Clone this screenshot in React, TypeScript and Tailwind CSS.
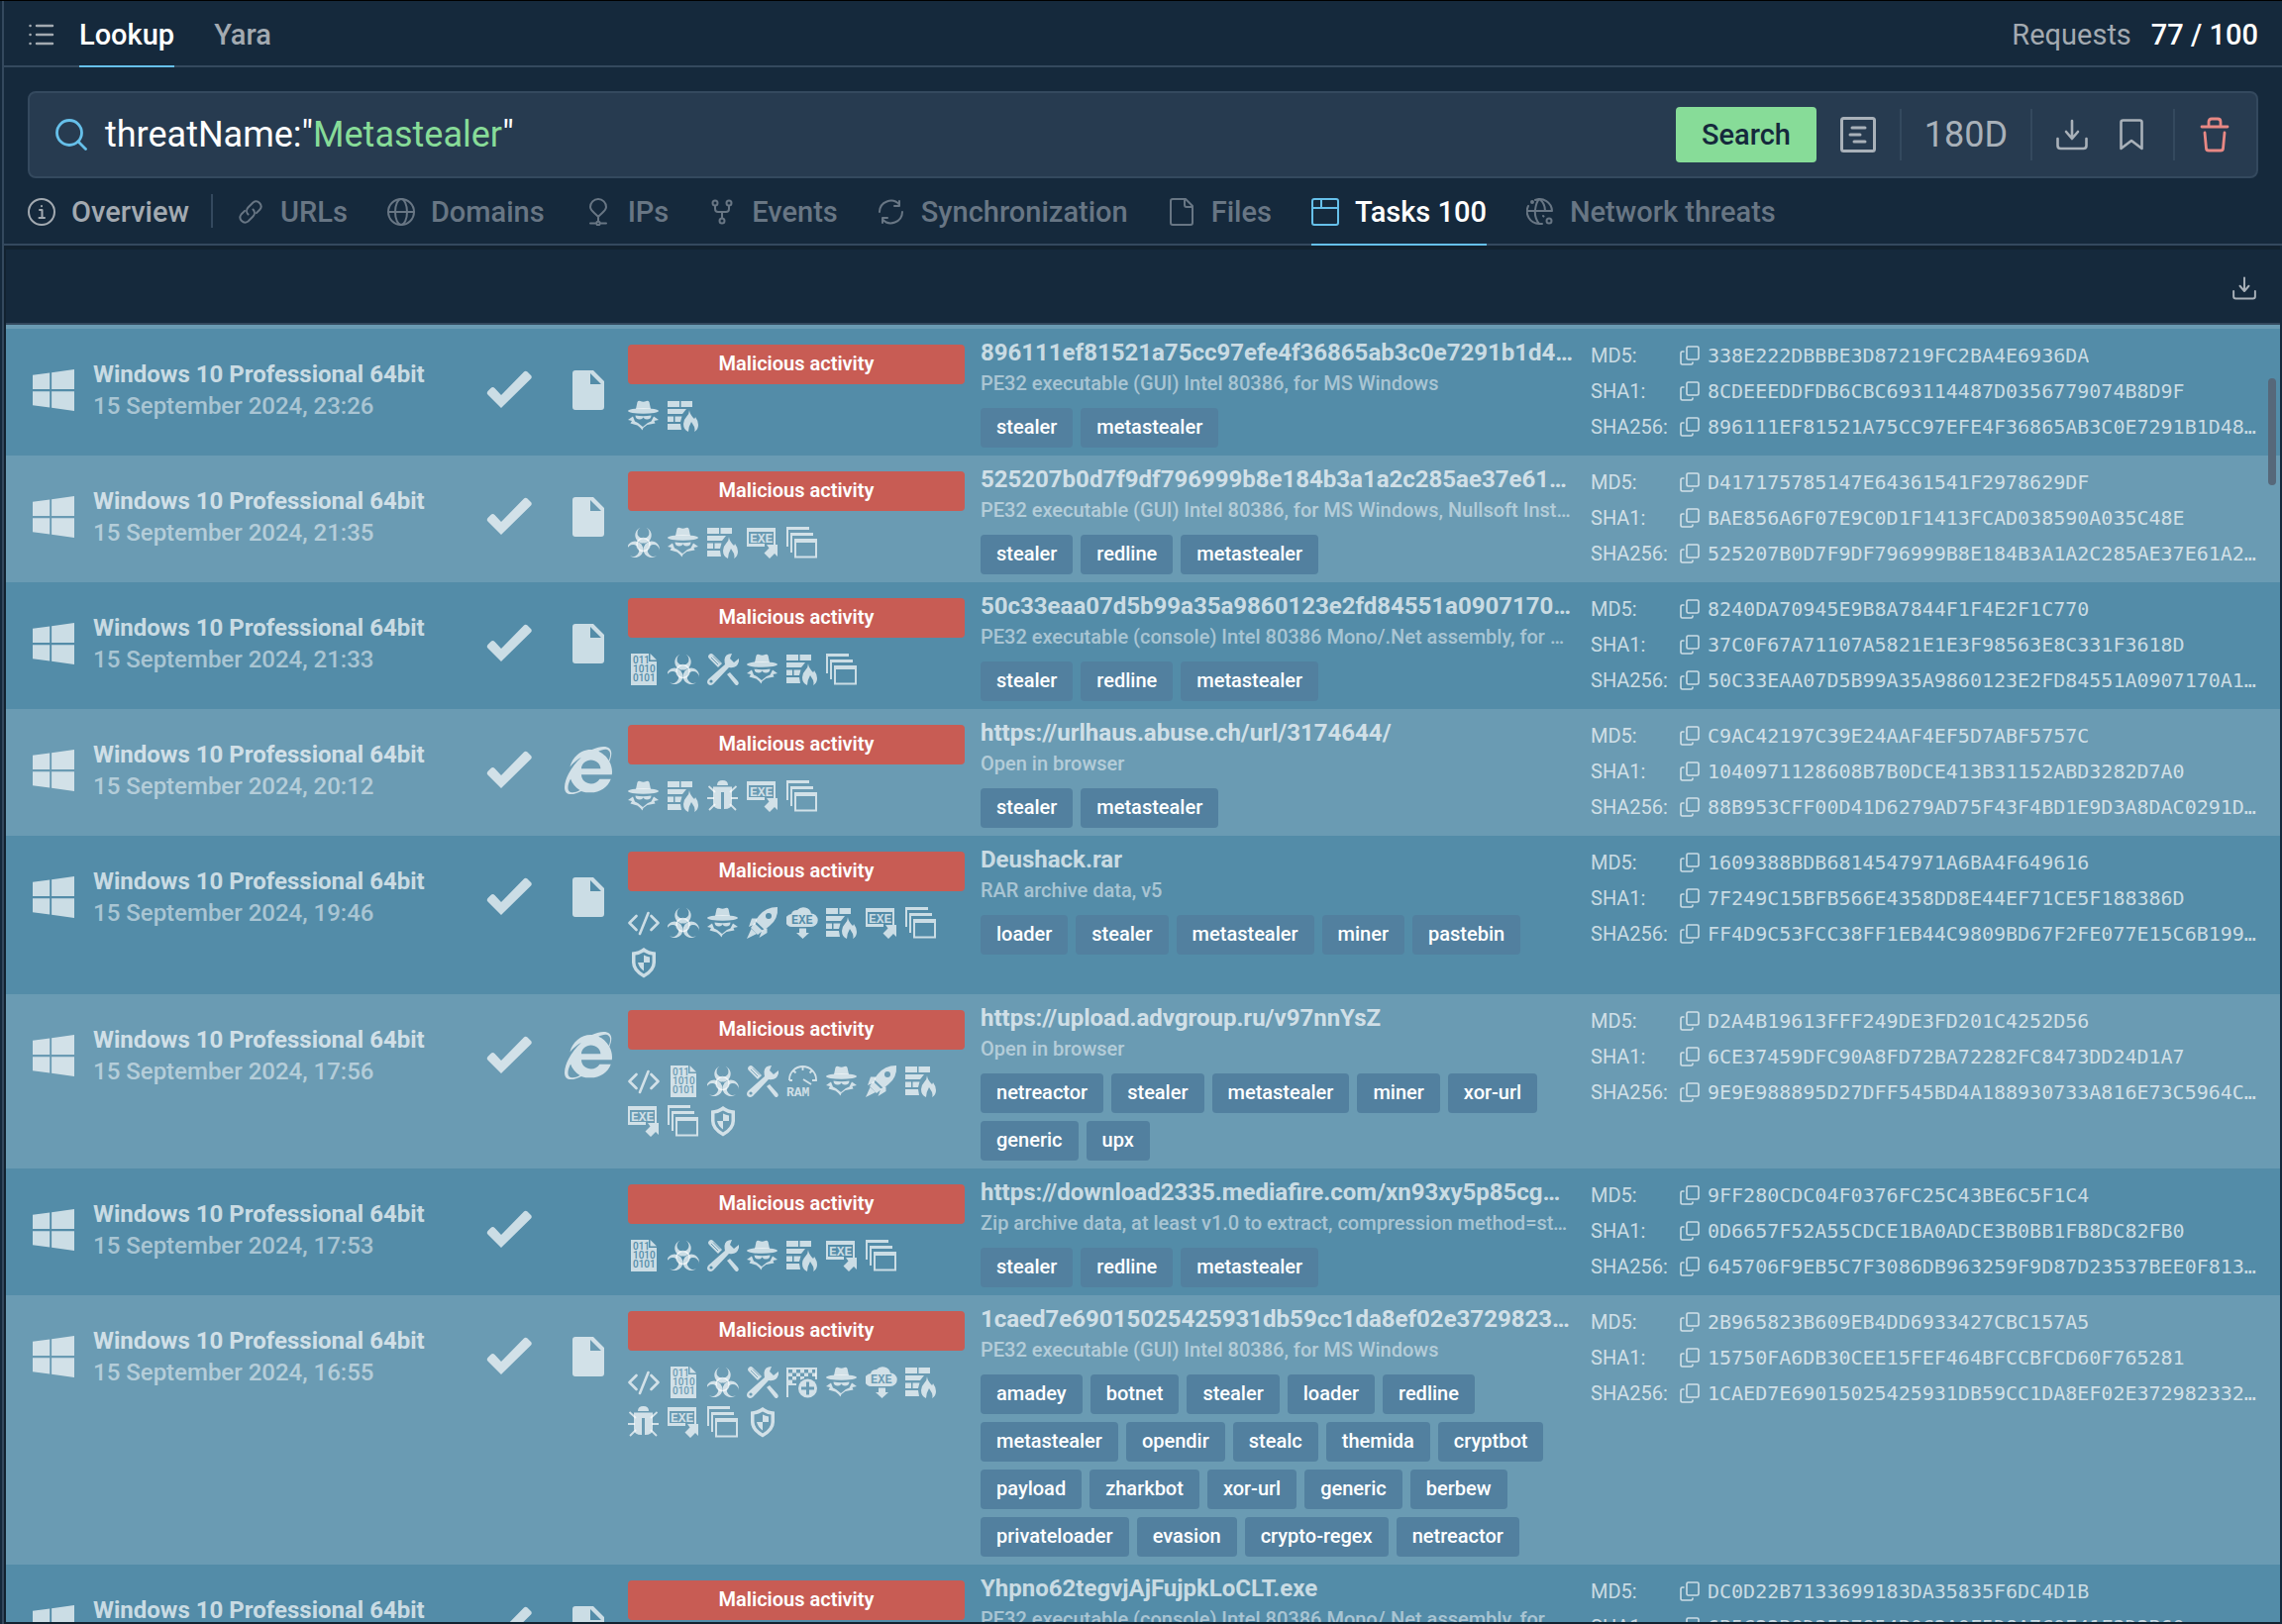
// Threat intelligence lookup, "Tasks" tab. Header, query bar, category tabs and
// the list of sandbox tasks. Row heights follow the tags / indicator icons.

import type { ReactNode } from "react";
import { FaInternetExplorer, FaWindows } from "react-icons/fa";

type Indicator =
  | "code" | "binary" | "bio" | "tools" | "ram" | "spy" | "rocket" | "cloud"
  | "firewall" | "bug" | "exe" | "windows" | "shield" | "flag";

type Task = {
  date: string;
  source?: "file" | "ie";
  indicators: Indicator[];
  title: string;
  kind: string;
  tags: string[];
  md5: string;
  sha1: string;
  sha256: string;
};

const TASKS: Task[] = [
  {
    date: "15 September 2024, 23:26",
    source: "file",
    indicators: ["spy", "firewall"],
    title: "896111ef81521a75cc97efe4f36865ab3c0e7291b1d48a",
    kind: "PE32 executable (GUI) Intel 80386, for MS Windows",
    tags: ["stealer", "metastealer"],
    md5: "338E222DBBBE3D87219FC2BA4E6936DA",
    sha1: "8CDEEEDDFDB6CBC693114487D0356779074B8D9F",
    sha256: "896111EF81521A75CC97EFE4F36865AB3C0E7291B1D48A7C",
  },
  {
    date: "15 September 2024, 21:35",
    source: "file",
    indicators: ["bio", "spy", "firewall", "exe", "windows"],
    title: "525207b0d7f9df796999b8e184b3a1a2c285ae37e61a2c",
    kind: "PE32 executable (GUI) Intel 80386, for MS Windows, Nullsoft Installer",
    tags: ["stealer", "redline", "metastealer"],
    md5: "D417175785147E64361541F2978629DF",
    sha1: "BAE856A6F07E9C0D1F1413FCAD038590A035C48E",
    sha256: "525207B0D7F9DF796999B8E184B3A1A2C285AE37E61A2C90",
  },
  {
    date: "15 September 2024, 21:33",
    source: "file",
    indicators: ["binary", "bio", "tools", "spy", "firewall", "windows"],
    title: "50c33eaa07d5b99a35a9860123e2fd84551a0907170a1b",
    kind: "PE32 executable (console) Intel 80386 Mono/.Net assembly, for MS Windows",
    tags: ["stealer", "redline", "metastealer"],
    md5: "8240DA70945E9B8A7844F1F4E2F1C770",
    sha1: "37C0F67A71107A5821E1E3F98563E8C331F3618D",
    sha256: "50C33EAA07D5B99A35A9860123E2FD84551A0907170A1B3E",
  },
  {
    date: "15 September 2024, 20:12",
    source: "ie",
    indicators: ["spy", "firewall", "bug", "exe", "windows"],
    title: "https://urlhaus.abuse.ch/url/3174644/",
    kind: "Open in browser",
    tags: ["stealer", "metastealer"],
    md5: "C9AC42197C39E24AAF4EF5D7ABF5757C",
    sha1: "1040971128608B7B0DCE413B31152ABD3282D7A0",
    sha256: "88B953CFF00D41D6279AD75F43F4BD1E9D3A8DAC0291D4F2",
  },
  {
    date: "15 September 2024, 19:46",
    source: "file",
    indicators: ["code", "bio", "spy", "rocket", "cloud", "firewall", "exe", "windows", "shield"],
    title: "Deushack.rar",
    kind: "RAR archive data, v5",
    tags: ["loader", "stealer", "metastealer", "miner", "pastebin"],
    md5: "1609388BDB6814547971A6BA4F649616",
    sha1: "7F249C15BFB566E4358DD8E44EF71CE5F188386D",
    sha256: "FF4D9C53FCC38FF1EB44C9809BD67F2FE077E15C6B199A0D",
  },
  {
    date: "15 September 2024, 17:56",
    source: "ie",
    indicators: ["code", "binary", "bio", "tools", "ram", "spy", "rocket", "firewall", "exe", "windows", "shield"],
    title: "https://upload.advgroup.ru/v97nnYsZ",
    kind: "Open in browser",
    tags: ["netreactor", "stealer", "metastealer", "miner", "xor-url", "generic", "upx"],
    md5: "D2A4B19613FFF249DE3FD201C4252D56",
    sha1: "6CE37459DFC90A8FD72BA72282FC8473DD24D1A7",
    sha256: "9E9E988895D27DFF545BD4A188930733A816E73C5964C3B1",
  },
  {
    date: "15 September 2024, 17:53",
    indicators: ["binary", "bio", "tools", "spy", "firewall", "exe", "windows"],
    title: "https://download2335.mediafire.com/xn93xy5p85cgwm3",
    kind: "Zip archive data, at least v1.0 to extract, compression method=store",
    tags: ["stealer", "redline", "metastealer"],
    md5: "9FF280CDC04F0376FC25C43BE6C5F1C4",
    sha1: "0D6657F52A55CDCE1BA0ADCE3B0BB1FB8DC82FB0",
    sha256: "645706F9EB5C7F3086DB963259F9D87D23537BEE0F813A5E",
  },
  {
    date: "15 September 2024, 16:55",
    source: "file",
    indicators: ["code", "binary", "bio", "tools", "flag", "spy", "cloud", "firewall", "bug", "exe", "windows", "shield"],
    title: "1caed7e69015025425931db59cc1da8ef02e372982332d",
    kind: "PE32 executable (GUI) Intel 80386, for MS Windows",
    tags: [
      "amadey", "botnet", "stealer", "loader", "redline",
      "metastealer", "opendir", "stealc", "themida", "cryptbot",
      "payload", "zharkbot", "xor-url", "generic", "berbew",
      "privateloader", "evasion", "crypto-regex", "netreactor",
    ],
    md5: "2B965823B609EB4DD6933427CBC157A5",
    sha1: "15750FA6DB30CEE15FEF464BFCCBFCD60F765281",
    sha256: "1CAED7E69015025425931DB59CC1DA8EF02E372982332D7F",
  },
  {
    date: "15 September 2024, 16:48",
    source: "file",
    indicators: ["bio", "spy", "firewall"],
    title: "Yhpno62tegvjAjFujpkLoCLT.exe",
    kind: "PE32 executable (console) Intel 80386 Mono/.Net assembly, for MS Windows",
    tags: ["stealer", "metastealer"],
    md5: "DC0D22B7133699183DA35835F6DC4D1B",
    sha1: "6B5C22B8D35B7854B0C2A0F5D8A7C9E41F3D2B60",
    sha256: "7D1F0B66C2A94E3385DB1C79A5E0F4421B8C6D93AA07E5F1",
  },
];

function Line({ children, className = "size-7", box = 28 }: { children: ReactNode; className?: string; box?: number }) {
  return (
    <svg
      viewBox={`0 0 ${box} ${box}`}
      className={`shrink-0 ${className}`}
      fill="none"
      stroke="currentColor"
      strokeWidth="2"
      strokeLinecap="round"
      strokeLinejoin="round"
      aria-hidden="true"
    >
      {children}
    </svg>
  );
}

const TABS: { label: string; icon: ReactNode; active?: boolean }[] = [
  {
    label: "URLs",
    icon: (
      <>
        <path d="M11.5 16.5a5 5 0 0 1 0-7l5-5a5 5 0 0 1 7 7l-3.6 3.6" />
        <path d="M16.5 11.5a5 5 0 0 1 0 7l-5 5a5 5 0 0 1-7-7l3.6-3.6" />
      </>
    ),
  },
  {
    label: "Domains",
    icon: (
      <>
        <circle cx="14" cy="14" r="13" />
        <ellipse cx="14" cy="14" rx="6" ry="13" />
        <path d="M1 14h26" />
      </>
    ),
  },
  {
    label: "IPs",
    icon: (
      <>
        <path d="M14 19c-3-4-8-6-8-10a8 8 0 0 1 16 0c0 4-5 6-8 10zM14 19v4M6 25.500h5M17 25.500h5" />
        <circle cx="14" cy="25.500" r="1.800" />
      </>
    ),
  },
  {
    label: "Events",
    icon: (
      <>
        <circle cx="7" cy="5" r="2.500" />
        <circle cx="21" cy="5" r="2.500" />
        <circle cx="14" cy="23" r="2.500" />
        <path d="M7 8v3q0 3 3 3h8q3 0 3-3V8M14 14v6" />
      </>
    ),
  },
  {
    label: "Synchronization",
    icon: (
      <>
        <path d="M2 14A11.500 11.500 0 0 1 22 6.500M22 3v5h-5" />
        <path d="M25 14A11.500 11.500 0 0 1 5 21.500M5 25v-5h5" />
      </>
    ),
  },
  {
    label: "Files",
    icon: <path d="M5 1h13l7 7v17q0 2-2 2H5q-2 0-2-2V3q0-2 2-2zM17 1v6q0 2 2 2h6" />,
  },
  {
    label: "Tasks 100",
    active: true,
    icon: (
      <>
        <rect x="1" y="1" width="26" height="26" rx="2" />
        <path d="M1 10h26M10 1v9" />
      </>
    ),
  },
  {
    label: "Network threats",
    icon: (
      <>
        <path d="M26 13A12.500 12.500 0 0 0 9 2M2 8a12.500 12.500 0 0 0 11 18q-5-6-4-14t4-11q6 4 6 12M1 13h25M13 26h3" />
        <circle cx="6" cy="4" r="1" />
        <circle cx="23" cy="23" r="2.500" />
        <path d="M17 18l.5.5" />
      </>
    ),
  },
];

const MONO_BOLD = { fontFamily: '"Liberation Mono", monospace', fontWeight: 700 };

// one lobe of the biohazard sign, turned twice for the others
const LOBE = "M12.500.8a8.200 8.200 0 1 0 6 0 6 6 0 1 1-6 0z";

// 32x32 glyphs; knocked-out parts take the row colour from --row
const GLYPHS: Record<Indicator, ReactNode> = {
  code: (
    <path
      d="M8.500 9 1.500 16l7 7M23.500 9l7 7-7 7M20.500 6l-8.500 21"
      fill="none" stroke="currentColor" strokeWidth="2.600" strokeLinecap="round" strokeLinejoin="round"
    />
  ),
  binary: (
    <>
      <path d="M3 0h18v8h8v24H3z" />
      <path d="M22.500 0 29 6.500h-6.500z" />
      <g className="fill-[var(--row)]" fontSize="10" fontWeight="500">
        <text x="5" y="10">011</text>
        <text x="5" y="19">1010</text>
        <text x="5" y="28">0101</text>
      </g>
    </>
  ),
  bio: (
    <>
      <path d={LOBE} />
      <path d={LOBE} transform="rotate(120 15.500 18)" />
      <path d={LOBE} transform="rotate(240 15.500 18)" />
      <circle cx="15.500" cy="18" r="6.500" fill="none" stroke="currentColor" strokeWidth="1.500" />
      <circle cx="15.500" cy="18" r="1.500" className="fill-[var(--row)]" />
    </>
  ),
  tools: (
    <>
      <path d="M2 1q2-2 4 0l9 9-4 4-9-9q-2-2 0-4z" />
      <path d="m4 4 7 7M6 2.500l7 7" className="stroke-[var(--row)]" strokeWidth="0.800" />
      <path d="m20 21 3-2 8 9q1.500 2 0 3.500T28 31z" />
      <path d="M25 0q-7 0-7.500 6 0 3 .5 5L1 26q-2 3 0 5t5 0l16-17q8 1.500 10-6V5l-5 4-4-4z" />
      <circle cx="4" cy="28" r="1.600" className="fill-[var(--row)]" />
    </>
  ),
  ram: (
    <>
      <path d="M3 15v-1a13.500 13 0 0 1 27 0v1h-4M3 15h3M16.500 1v4M7 5l2.500 2.500M26 5l-2.500 2.500M17 14l8 5" fill="none" stroke="currentColor" strokeWidth="1.800" />
      <text x="0" y="31" fontSize="13" style={MONO_BOLD}>RAM</text>
    </>
  ),
  spy: (
    <>
      <path d="M8 9 9.500 2q1-2 3-1 3 1.500 6 0 2-1 3 1L23 9z" />
      <ellipse cx="15.500" cy="11" rx="15.500" ry="2.800" />
      <path d="M7.500 15.500q8 1.500 16 0 0 4-4.500 4-2.500 0-3.500-2-1 2-3.500 2-4.500 0-4.500-4z" />
      <path d="M5 16.500 0 20l4 1-1.500 2.500 7 2 3 2.500 2 2.500 1-2.500 4-3 8-1.500L26.500 21l4.500-1-5-3.500-2.500 5-3.500 1.500-5 4-5-4-3-1.500z" />
    </>
  ),
  rocket: (
    <>
      <path d="M31 0Q19 0 12 9L8.500 14l9.500 9 5-4Q32 12 31 0z" />
      <path d="M10.500 11.500H5L2 20l7-3zM20.500 21.500V26l-8 5 3-8z" />
      <path d="M7.500 16 4 21 11 28l5-4z" />
      <path d="M4.500 22 0 32l10-5z" />
      <circle cx="22" cy="9" r="3" className="fill-[var(--row)]" />
    </>
  ),
  cloud: (
    <>
      <path d="M6 20a6.500 6.500 0 0 1-1-13q1-4 6-4 3-3.500 8-2.500t6 6a6.500 6.500 0 0 1 0 13.500z" />
      <text x="5" y="17" fontSize="12" className="fill-[var(--row)]" style={MONO_BOLD}>EXE</text>
      <path d="M13 21.500h7V26h3l-6.500 6L10 26h3z" />
    </>
  ),
  firewall: (
    <>
      <path d="M0 1h12v6H0zM13.500 1H25v6H13.500zM0 9h19l-4 5H0zM0 16.500h6V22H0zM7.500 16.500h7L13 22H7.500zM0 24h13l1 6H0z" />
      <path d="M22 10q0 4 5 9 1-1 1-2 3 4 3 8 0 5-4 7 1-2 0-5l-3-5q-3 5-3 10-5-2-5-8 0-4 3-7t3-7z" />
    </>
  ),
  bug: (
    <>
      <path d="M10 5q0-5 5.500-5T21 5z" />
      <path d="M6 6.500h19V23q0 6-8 6V12h-3v17q-8 0-8-6z" />
      <path d="M1.500 6 8 12M29.500 6 23 12M0 18h7M31 18h-7M2 30l6-6M29 30l-6-6" stroke="currentColor" strokeWidth="1.800" />
    </>
  ),
  exe: (
    <>
      <path d="M0 1h29v17h-2V5H2v12h16v3H0z" />
      <text x="3" y="15.500" fontSize="13" style={MONO_BOLD}>EXE</text>
      <path d="M20 18h11v12l-3-3-5 5-5.500-5.500 5-5z" />
    </>
  ),
  windows: (
    <>
      <path d="M0 0h23v3H2v17H0z" />
      <path d="M4 6h23v3H6v17H4z" />
      <path fillRule="evenodd" d="M8 12h23v19.500H8zM10 16v13.500h19V16z" />
    </>
  ),
  shield: (
    <>
      <path fillRule="evenodd" d="M16 1q5 4 12 4.500V16q0 9-12 15.500Q4 25 4 16V5.500Q11 5 16 1zM16 5.500Q12 8 7.500 8.500V16q0 6.500 8.500 11.500 8.500-5 8.500-11.500V8.500Q20 8 16 5.500z" />
      <path d="M16 8.500q3 1.500 6 2V16h-6zM16 16v8.500q-5-3.500-6-8.500z" />
    </>
  ),
  flag: (
    <>
      <path d="M0 1h2v30H0zM2 1h29v2H2zM29 3h2v10h-2zM2 17h8v2H2z" />
      <path d="M6 3h4v3.500H6zM14 3h4v3.500h-4zM22 3h4v3.500h-4zM2 6.500h4V10H2zM10 6.500h4V10h-4zM18 6.500h4V10h-4zM26 6.500h4V10h-4zM6 10h4v3.500H6zM14 10h4v2l-4 1.500zM2 13.500h4V17H2z" />
      <circle cx="21.500" cy="22" r="9.500" />
      <path d="M20 15.500h3v5h5v3h-5v5h-3v-5h-5v-3h5z" className="fill-[var(--row)]" />
    </>
  ),
};

function Download({ className }: { className: string }) {
  return (
    <Line box={32} className={className}>
      <path d="M16 2v17M10 13l6 7 6-7M1.500 20v7q0 3 3 3h23q3 0 3-3v-7" strokeWidth="2.600" />
    </Line>
  );
}

function Divider() {
  return <span className="h-13 w-0.5 bg-[#34495e]" />;
}

function Hash({ name, value }: { name: string; value: string }) {
  return (
    <div className="flex h-9 items-center text-xl text-white/70">
      <span className="w-[90px] shrink-0">{name}:</span>
      <button type="button" aria-label={`Copy ${name}`} className="mr-2 shrink-0">
        <Line box={20} className="size-5">
          <rect x="7" y="1" width="12" height="13" rx="1.500" strokeWidth="1.600" />
          <path d="M4 6H2.500Q1 6 1 7.500v10Q1 19 2.500 19h9q1.500 0 1.500-1.500V17" strokeWidth="1.600" />
        </Line>
      </button>
      <span className="truncate font-['DejaVu_Sans_Mono',monospace]">{value}</span>
    </div>
  );
}

function TaskRow({ task }: { task: Task }) {
  return (
    <tr className="align-top odd:bg-[#538ca8] odd:[--row:#538ca8] even:bg-[#6a9bb3] even:[--row:#6a9bb3]">
      <td className="pt-[30px] pl-[27px]">
        <div className="flex items-center gap-[19px]">
          <FaWindows className="h-12 w-[42px] text-white/70" />
          <div className="text-2xl leading-8">
            <div className="font-bold text-white/70">Windows 10 Professional 64bit</div>
            <div className="font-medium text-white/50">{task.date}</div>
          </div>
        </div>
      </td>
      <td className="pt-[38px]">
        <svg viewBox="0 0 46 48" className="mx-auto h-12 w-[46px] text-white/70" fill="currentColor" role="img" aria-label="Done">
          <path d="M15 42 1.500 28.500q-1.500-1.500 0-3.500l3-3q2-2 4 0l6.500 7L38 5.500q1.500-1.500 3.500 0L45 9q1.500 1.500 0 3.500z" />
        </svg>
      </td>
      <td className="pt-[38px]">
        {task.source === "file" && (
          <svg viewBox="0 0 32 48" className="mx-auto h-12 w-8 text-white/70" fill="currentColor" aria-hidden="true">
            <path fillRule="evenodd" d="M4 4h17l11 11v26q0 3-3 3H3q-3 0-3-3V7q0-3 3-3zM18 7v11h11z" />
          </svg>
        )}
        {task.source === "ie" && <FaInternetExplorer className="mx-auto size-12 text-white/70" />}
      </td>
      <td className="py-4 pr-4">
        <div className="rounded bg-[#c85c54] pb-0.5 text-center text-xl leading-[38px] font-semibold text-white">Malicious activity</div>
        <div className="mt-4 flex flex-wrap gap-2 text-white/70">
          {task.indicators.map((name) => (
            <svg key={name} viewBox="0 0 32 32" className="size-8" fill="currentColor" aria-hidden="true">
              {GLYPHS[name]}
            </svg>
          ))}
        </div>
      </td>
      <td className="py-2 pr-4">
        <div className="truncate text-2xl leading-8 font-bold text-white/70">{task.title}</div>
        <div className="truncate text-xl leading-[30px] font-medium text-white/50">{task.kind}</div>
        <div className="mt-2.5 flex flex-wrap gap-2">
          {task.tags.map((tag) => (
            <span key={tag} className="rounded bg-[#52809f] px-4 pb-0.5 text-xl leading-[38px] font-medium text-white">{tag}</span>
          ))}
        </div>
      </td>
      <td className="pt-[9px] pr-[22px]">
        <Hash name="MD5" value={task.md5} />
        <Hash name="SHA1" value={task.sha1} />
        <Hash name="SHA256" value={task.sha256} />
      </td>
    </tr>
  );
}

export default function App() {
  return (
    <div className="flex h-screen flex-col overflow-hidden border-t border-black bg-[#15293c] pl-0.5 font-[Roboto,sans-serif] text-[29px] leading-8">
      <div className="flex min-h-0 flex-1 flex-col border-l-2 border-[#34495e]">
        <header className="flex h-[67px] shrink-0 items-center border-b-2 border-[#34495e] px-6">
          <button type="button" aria-label="Menu" className="mr-6 text-[#a3aab1]">
            <Line className="h-7 w-7">
              <path d="M2.500 6h.1M2.500 15h.1M2.500 24h.1M9 6h16M9 15h16M9 24h16" strokeWidth="2.500" />
            </Line>
          </button>
          <nav className="-mb-0.5 flex gap-10 self-stretch">
            <button type="button" className="border-b-2 border-[#66c0ea] pt-0.5 font-medium text-white">Lookup</button>
            <button type="button" className="border-b-2 border-transparent pt-0.5 font-medium text-[#a3aab1]">Yara</button>
          </nav>
          <div className="ml-auto flex gap-5 pt-0.5">
            <span className="text-[#a3aab1]">Requests</span>
            <span className="font-medium text-white">77 / 100</span>
          </div>
        </header>

        <form className="mx-6 mt-6 flex h-[88px] shrink-0 items-center rounded-lg border-2 border-[#34495e] bg-[#273b50] pr-6 pl-[26px]">
          <Line box={32} className="size-8 text-[#66c0ea]">
            <circle cx="14" cy="14" r="12.500" strokeWidth="2.800" />
            <path d="m23 23 7.500 7.500" strokeWidth="2.800" />
          </Line>
          {/* the input sits over a coloured copy of the query */}
          <div className="ml-[18px] grid flex-1 items-center text-4xl leading-10">
            <span aria-hidden="true" className="col-start-1 row-start-1 text-white">
              threatName:"<span className="text-[#87dc98]">Metastealer</span>"
            </span>
            <input
              aria-label="Query"
              defaultValue={'threatName:"Metastealer"'}
              className="col-start-1 row-start-1 w-full bg-transparent text-transparent caret-white outline-none"
            />
          </div>
          <button type="button" className="h-14 w-[142px] rounded bg-[#87dc98] font-medium text-[#15293c]">Search</button>
          <button type="button" aria-label="Query builder" className="mx-6 text-[#a9b1b9]">
            <Line box={36} className="size-9">
              <rect x="1.500" y="1.500" width="33" height="33" rx="2" strokeWidth="3" />
              <path d="M12 11h13M10 18h10M14 25h11" strokeWidth="3" />
            </Line>
          </button>
          <Divider />
          <button type="button" className="w-[130px] text-4xl text-[#a9b1b9]">180D</button>
          <Divider />
          <button type="button" aria-label="Download" className="ml-6 text-[#a9b1b9]">
            <Download className="size-8" />
          </button>
          <button type="button" aria-label="Bookmark" className="mr-[26px] ml-7 text-[#a9b1b9]">
            <Line box={32} className="size-8">
              <path d="M5.500 30V3.500q0-2 2-2h17q2 0 2 2V30L16 22z" strokeWidth="2.600" />
            </Line>
          </button>
          <Divider />
          <button type="button" aria-label="Clear" className="ml-[22px] text-[#e88884]">
            <Line box={36} className="size-9">
              <path d="M5 10h26M12 9V5q0-3 3-3h6q3 0 3 3v4M8 16l1.500 16q.2 2 2.500 2h12q2.300 0 2.500-2L28 16" strokeWidth="2.800" />
            </Line>
          </button>
        </form>

        <nav className="flex h-[68px] shrink-0 items-center border-b-2 border-[#34495e] pl-6 font-medium">
          <button type="button" className="flex items-center gap-4 pt-0.5 text-[#a3aab1]">
            <Line>
              <circle cx="14" cy="14" r="13" />
              <path d="M12 12h2.500v7.500M11.500 20h5.500M14 8v.2" />
            </Line>
            Overview
          </button>
          <span className="mr-6 ml-[22px] h-[34px] w-0.5 bg-[#34495e]" />
          <div className="-mb-0.5 flex gap-10 self-stretch">
            {TABS.map((tab) => (
              <button
                key={tab.label}
                type="button"
                className={`flex items-center gap-4 border-b-2 pt-0.5 ${tab.active ? "border-[#66c0ea] text-white" : "border-transparent text-[#687684]"}`}
              >
                <span className={tab.active ? "text-[#66c0ea]" : ""}>
                  <Line>{tab.icon}</Line>
                </span>
                {tab.label}
              </button>
            ))}
          </div>
        </nav>

        <main className="relative mr-0.5 flex min-h-0 flex-1 flex-col border-b-2 border-l-2 border-[#122230]">
          <div className="flex h-20 shrink-0 items-center justify-end border-t-4 border-b-2 border-t-[#122230] border-b-[#34495e] pr-6">
            <button type="button" aria-label="Export list" className="mt-1 text-[#a9b1b9]">
              <Download className="size-6" />
            </button>
          </div>
          <div className="min-h-0 flex-1 overflow-hidden border-t-4 border-[#6a9bb3]">
            <table className="w-full table-fixed border-collapse">
              <colgroup>
                <col className="w-[468px]" />
                <col className="w-20" />
                <col className="w-20" />
                <col className="w-[356px]" />
                <col />
                <col className="w-[696px]" />
              </colgroup>
              <tbody>
                {TASKS.map((task) => (
                  <TaskRow key={task.date} task={task} />
                ))}
              </tbody>
            </table>
          </div>
          <div className="absolute top-[134px] right-1 h-27 w-2 rounded-full bg-[#56687a]" />
        </main>
      </div>
    </div>
  );
}
